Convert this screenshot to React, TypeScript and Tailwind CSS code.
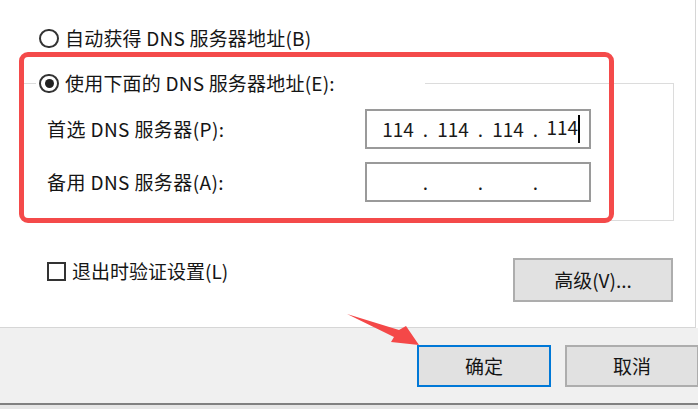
import React from 'react';

const Radio: React.FC<{ checked?: boolean }> = ({ checked }) => (
  <span className="w-[20px] h-[19px] rounded-full border-2 border-[#333] bg-white flex items-center justify-center shrink-0">
    {checked && <span className="w-[9px] h-[9px] rounded-full bg-[#222]"></span>}
  </span>
);

const IpField: React.FC<{ parts: string[]; cursor?: boolean }> = ({ parts, cursor }) => (
  <div className="w-[226px] h-[40px] border-2 border-[#9a9a9a] bg-white flex items-center pl-[9px] text-[19px] text-[#1a1a1a]">
    {parts.map((p, i) => (
      <React.Fragment key={i}>
        {i > 0 && <span className="w-[11px] text-center">.</span>}
        <span className="w-[44px] text-center whitespace-nowrap">
          {p}
          {cursor && i === 3 && <span className="inline-block w-[1.5px] h-[28px] bg-black align-middle"></span>}
        </span>
      </React.Fragment>
    ))}
  </div>
);

const App: React.FC = () => {
  return (
    <div className="relative w-[698px] h-[409px] overflow-hidden bg-white font-['Noto_Sans_CJK_SC',sans-serif] text-[19px] leading-[24px] text-[#151515]">
      <div className="w-[696px] h-[328px] border-r border-b border-[#d6d6d6] bg-white pt-[26px] pl-[22px]">
        <div className="flex items-center h-[24px] ml-[17px] gap-[6px]">
          <Radio />
          <span className="tracking-[0.2px]">自动获得 DNS 服务器地址(B)</span>
        </div>

        <fieldset className="mt-[21px] w-[652px] border border-[#dcdcdc] pl-[13px] pb-[18px]">
          <legend className="w-[389px] h-[24px] flex items-center gap-[6px]">
            <span className="ml-[3px]"><Radio checked /></span>
            <span className="tracking-[0.2px]">使用下面的 DNS 服务器地址(E):</span>
          </legend>
          <div className="pl-[11px] mt-[14px] flex flex-col gap-[13px]">
            <div className="flex items-center">
              <span className="w-[318px] tracking-[0.4px]">首选 DNS 服务器(P):</span>
              <IpField parts={['114', '114', '114', '114']} cursor />
            </div>
            <div className="flex items-center">
              <span className="w-[318px] tracking-[0.4px]">备用 DNS 服务器(A):</span>
              <IpField parts={['', '', '', '']} />
            </div>
          </div>
        </fieldset>

        <div className="w-[652px] mt-[37px] flex items-start justify-between">
          <div className="flex items-center h-[24px] mt-[1px] ml-[25px] gap-[6px]">
            <span className="w-[19px] h-[19px] border-2 border-[#333] bg-white"></span>
            <span>退出时验证设置(L)</span>
          </div>
          <button className="w-[160px] h-[44px] mr-[1px] bg-[#e1e1e1] border-2 border-[#adadad]">高级(V)...</button>
        </div>
      </div>

      <div className="h-[75px] bg-[#f0f0f0] pt-[17px] pl-[417px] flex gap-[14px]">
        <button className="w-[134px] h-[42px] shrink-0 bg-[#e1e1e1] border-2 border-[#0078d7]">确定</button>
        <button className="w-[134px] h-[42px] shrink-0 bg-[#e1e1e1] border-2 border-[#adadad]">取消</button>
      </div>
      <div className="h-[2px] bg-[#808080]"></div>
      <div className="h-[4px] bg-[#e6e6e6]"></div>

      {/* annotation overlays */}
      <div className="absolute left-[19px] top-[52px] w-[595px] h-[171px] border-[5px] border-[#f44a4a] rounded-[9px] pointer-events-none"></div>
      <svg className="absolute left-0 top-0 pointer-events-none" width="698" height="409" viewBox="0 0 698 409">
        <polygon points="347,314 399,330 406,326 419,345 391,342 394,337" fill="#f44848" />
      </svg>
    </div>
  );
};

export default App;
